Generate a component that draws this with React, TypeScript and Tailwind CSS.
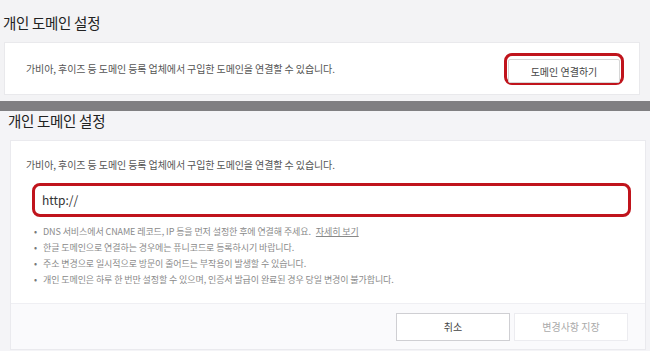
export default function App() {
  const font = { fontFamily: '"Noto Sans CJK KR", "Noto Sans", sans-serif' };
  const notes = [
    'DNS 서비스에서 CNAME 레코드, IP 등을 먼저 설정한 후에 연결해 주세요.',
    '한글 도메인으로 연결하는 경우에는 퓨니코드로 등록하시기 바랍니다.',
    '주소 변경으로 일시적으로 방문이 줄어드는 부작용이 발생할 수 있습니다.',
    '개인 도메인은 하루 한 번만 설정할 수 있으며, 인증서 발급이 완료된 경우 당일 변경이 불가합니다.',
  ];

  return (
    <div className="w-[650px] h-[351px] overflow-hidden flex flex-col bg-[#f3f3f5]" style={font}>
      {/* Before: collapsed state */}
      <section className="h-[101px] flex flex-col pl-[4px] pr-[10px]">
        <h2 className="h-[42px] pt-[11px] text-[14.5px] leading-[24px] text-[#222] tracking-[-0.3px] -ml-[1px]">개인 도메인 설정</h2>
        <div className="h-[53px] bg-white border border-[#e9e9ec] flex items-center justify-between pl-[21px] pr-[15px]">
          <p className="text-[10px] text-[#555] tracking-[-0.1px]">
            가비아, 후이즈 등 도메인 등록 업체에서 구입한 도메인을 연결할 수 있습니다.
          </p>
          <div className="w-[120px] h-[32px] rounded-[8px] border-[3px] border-[#c0141c] p-[1px]">
            <button className="w-full h-full bg-white border border-[#d6d6d6] text-[10px] text-[#444] rounded-[2px]">
              도메인 연결하기
            </button>
          </div>
        </div>
      </section>

      <div className="h-[10px] bg-[#807f82]" />

      {/* After: expanded form */}
      <section className="flex-1 flex flex-col pl-[10px] pr-[4px] bg-[#f4f4f7]">
        <h2 className="h-[29px] -mt-[2px] pt-[0px] text-[14.5px] leading-[24px] text-[#222] tracking-[-0.3px] -ml-[2px]">개인 도메인 설정</h2>
        <div className="h-[210px] mt-[2px] flex flex-col border border-[#eaeaee] bg-white">
          <div className="h-[162px] pl-[15px] pr-[15px] pt-[16px]">
            <p className="text-[10px] leading-[16px] text-[#555] tracking-[-0.1px]">
              가비아, 후이즈 등 도메인 등록 업체에서 구입한 도메인을 연결할 수 있습니다.
            </p>
            <div className="mt-[10px] ml-[6px] w-[599px] h-[34px] rounded-[8px] border-[3px] border-[#c0141c] flex items-center pl-[7px]">
              <span className="text-[12px] text-[#333]">http://</span>
            </div>
            <ul className="mt-[7px] ml-[8px] flex flex-col">
              {notes.map((n, i) => (
                <li key={i} className="flex items-center h-[16px] text-[9px] text-[#8a8a8a] tracking-[-0.1px]">
                  <span className="w-[9px] text-[#777]">•</span>
                  <span>{n}</span>
                  {i === 0 && (
                    <span className="ml-[5px] underline text-[#888]">자세히 보기</span>
                  )}
                </li>
              ))}
            </ul>
          </div>
          <div className="flex-1 bg-[#fafafc] border-t border-[#efeff3] flex items-center justify-end gap-[4px] pr-[17px]">
            <button className="w-[114px] h-[28px] bg-white border border-[#cfcfd3] text-[10px] text-[#444]">
              취소
            </button>
            <button className="w-[114px] h-[28px] bg-white border border-[#ececf0] text-[10px] text-[#aaa]">
              변경사항 지장
            </button>
          </div>
        </div>
      </section>
    </div>
  );
}
